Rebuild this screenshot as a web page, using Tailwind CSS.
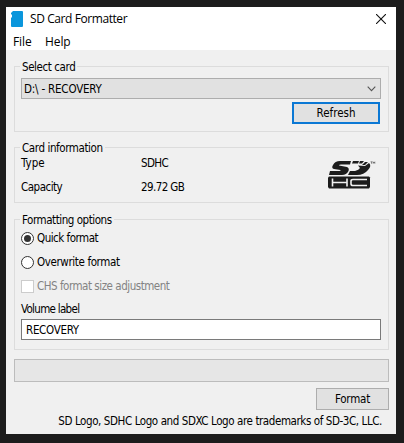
<!DOCTYPE html>
<html lang="en">
<head>
<meta charset="utf-8">
<title>SD Card Formatter</title>
<script src="https://cdn.jsdelivr.net/npm/@tailwindcss/browser@4"></script>
</head>
<body class="w-[404px] h-[443px] overflow-hidden bg-[#1c1c1c] pt-[7px] pl-[6px]">
<main class="w-[390px] h-[427px] bg-[#f0f0f0] flex flex-col text-[11.5px] leading-[16px] text-black whitespace-nowrap font-['DejaVu_Sans_Condensed','DejaVu_Sans',sans-serif] [font-stretch:condensed] tracking-[-0.41px]">
  <header class="h-[43px] shrink-0 bg-white text-[12px] font-['Open_Sans',sans-serif] [font-stretch:normal] tracking-[-0.1px]">
    <div class="h-[24px] flex items-center pl-[5px] pr-[10px]">
      <svg class="w-[12px] h-[16px]" viewBox="0 0 12 16"><path d="M2 0H11Q12 0 12 1V15Q12 16 11 16H1Q0 16 0 15V7L1 6V4L0 3V2Z" fill="#0a96dc"/></svg>
      <h1 class="ml-[7px]"><span class="tracking-[-0.42px]">SD Card Formatter</span></h1>
      <svg class="ml-auto w-[10px] h-[10px]" viewBox="0 0 10 10"><path d="M0 0L10 10M10 0L0 10" stroke="#111" stroke-width="1.1"/></svg>
    </div>
    <nav class="flex pl-[7px] pt-[3px]"><span class="w-[32px]">File</span><span>Help</span></nav>
  </header>
  <div class="flex flex-col pl-[8px] pr-[7px]">
    <section class="mt-[16px] h-[66px] border border-[#dcdcdc] px-[6px]">
      <h2 class="-mt-[8px] ml-[-1px] w-fit bg-[#f0f0f0] px-[2px]"><span>Select card</span></h2>
      <div class="mt-[3px] h-[21px] w-[360px] border border-[#adadad] bg-[#e1e1e1] flex items-center pl-[2px] pr-[4px]">
        <span class="tracking-[-0.2px]">D:\ - RECOVERY</span>
        <svg class="ml-auto w-[9px] h-[6px]" viewBox="0 0 9 6"><path d="M.7.7L4.5 4.6L8.3.7" fill="none" stroke="#555" stroke-width="1.1"/></svg>
      </div>
      <div class="mt-[3px] ml-[271px] w-[88px] h-[22px] border-2 border-[#0b78d4] bg-[#e1e1e1] flex items-center justify-center"><span class="tracking-normal">Refresh</span></div>
    </section>
    <section class="mt-[15px] h-[56px] border border-[#dcdcdc] px-[6px]">
      <h2 class="-mt-[8px] ml-[-1px] w-fit bg-[#f0f0f0] px-[2px]"><span>Card information</span></h2>
      <div class="flex">
        <dl class="grid grid-cols-[120px_auto] gap-y-[8px] -mt-px">
          <dt><span class="tracking-normal">Type</span></dt><dd><span class="tracking-[-0.6px]">SDHC</span></dd><dt><span class="tracking-[-0.5px]">Capacity</span></dt><dd><span class="tracking-[-0.6px]">29.72 GB</span></dd>
        </dl>
        <svg class="ml-auto mr-[6px] mt-[5px] w-[48px] h-[28px]" viewBox="0 0 48 28">
          <path d="M23 0L22 3.500H13Q11 3.500 11 4.500L19 6Q21.500 7 20.500 10Q18.500 14 14 14H1L2 10H11.500Q13 10 12.500 9L6 8Q3 7 5 4Q7 0 12 0Z" fill="#1c1c1c"/>
          <path d="M25 0H31L30 2.500H24ZM32 0H36L34 2.500H31ZM37 1L40 1L37 4H34ZM30 4.500L37 5L41 2Q44 5 40 9Q36 14 29 14H20L22 10H27Q31 9 32 7Z" fill="#1c1c1c"/>
          <path d="M1 15.500H41L42 16.500V26L41 27.500H1L0 26V16.500Z" fill="#1c1c1c"/>
          <path d="M4.500 17.500V25.500M4.500 21.500H19M19 17.500V25.500M39 18.500H25Q23 18.500 23 20V23Q23 24.500 25 24.500H39" fill="none" stroke="#f0f0f0" stroke-width="1.6"/>
          <path d="M42.500 .8H44.500M43.500 .8V2.800M45.200 2.800V.8L46 2L46.800 .8V2.800" fill="none" stroke="#333" stroke-width=".5"/>
        </svg>
      </div>
    </section>
    <section class="mt-[16px] h-[131px] border border-[#dcdcdc] px-[6px]">
      <h2 class="-mt-[8px] ml-[-1px] w-fit bg-[#f0f0f0] px-[2px]"><span class="tracking-[-0.46px]">Formatting options</span></h2>
      <div class="mt-[2px] flex items-center gap-[3px]"><i class="w-[13px] h-[13px] rounded-full border border-[#333] bg-white flex items-center justify-center"><b class="w-[7px] h-[7px] rounded-full bg-[#333]"></b></i><span class="tracking-[-0.5px]">Quick format</span></div>
      <div class="mt-[8px] flex items-center gap-[3px]"><i class="w-[13px] h-[13px] rounded-full border border-[#333] bg-white"></i><span class="tracking-[-0.38px]">Overwrite format</span></div>
      <div class="mt-[8px] flex items-center gap-[3px] text-[#838383]"><i class="w-[13px] h-[13px] border border-[#ccc] bg-white"></i><span class="tracking-[-0.48px]">CHS format size adjustment</span></div>
      <label class="block mt-[7px]"><span class="tracking-[-0.7px]">Volume label</span></label>
      <div class="mt-[2px] h-[21px] w-[360px] border border-[#7a7a7a] bg-white flex items-center pl-[4px]"><span class="tracking-[-0.3px]">RECOVERY</span></div>
    </section>
    <div class="mt-[9px] h-[23px] border border-[#bcbcbc] bg-[#e6e6e6]"></div>
    <div class="mt-[6px] ml-auto w-[73px] h-[22px] border border-[#adadad] bg-[#e1e1e1] flex items-center justify-center"><span class="tracking-[-0.2px]">Format</span></div>
    <footer class="mt-[3px] pr-[7px] text-right"><span>SD Logo, SDHC Logo and SDXC Logo are trademarks of SD-3C, LLC.</span></footer>
  </div>
</main>
</body>
</html>
